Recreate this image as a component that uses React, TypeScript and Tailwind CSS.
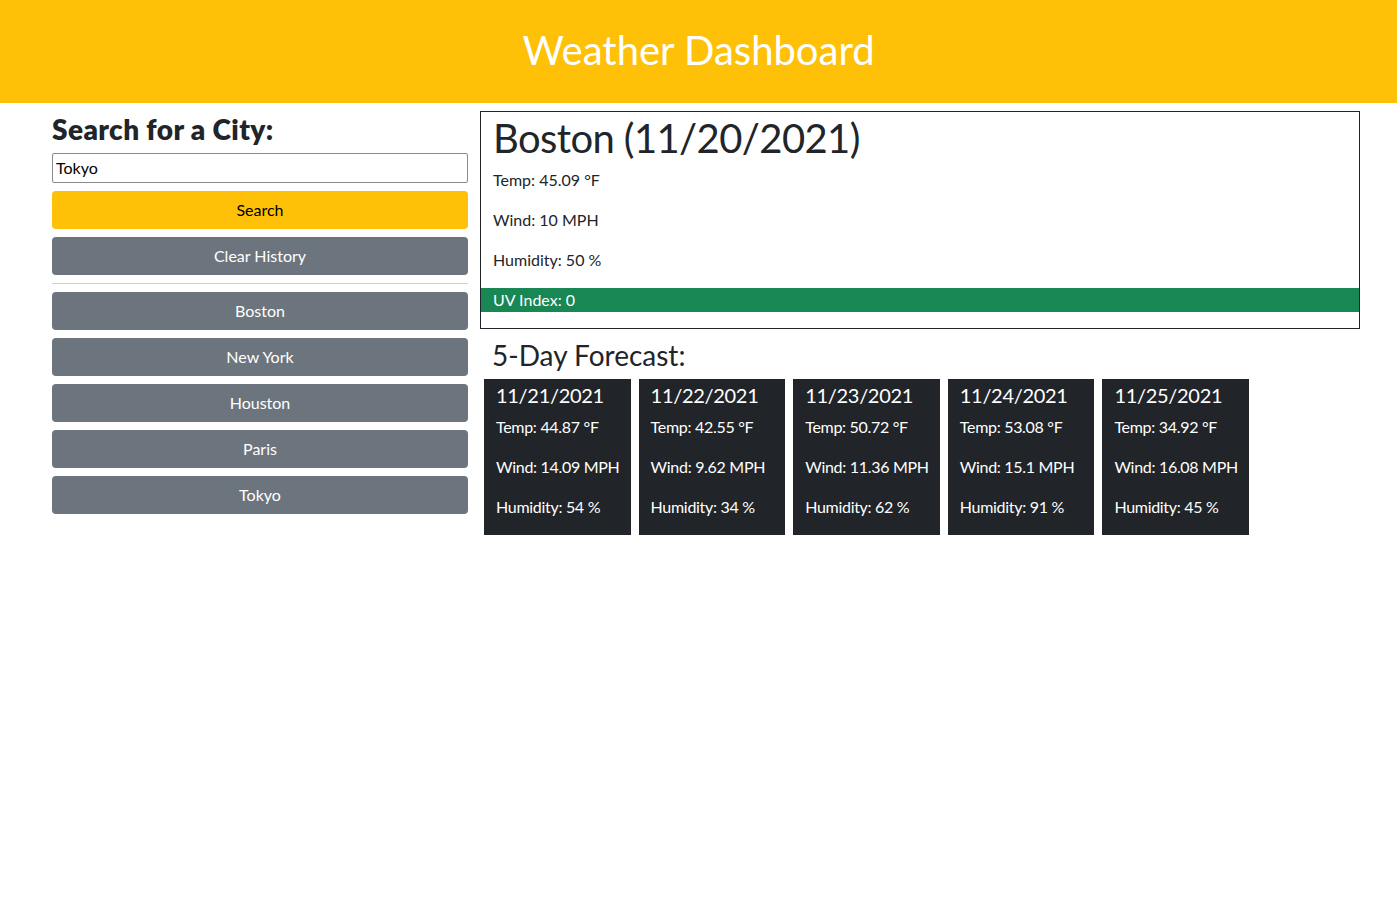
const forecast = [
  { date: "11/21/2021", temp: "44.87", wind: "14.09", hum: "54" },
  { date: "11/22/2021", temp: "42.55", wind: "9.62", hum: "34" },
  { date: "11/23/2021", temp: "50.72", wind: "11.36", hum: "62" },
  { date: "11/24/2021", temp: "53.08", wind: "15.1", hum: "91" },
  { date: "11/25/2021", temp: "34.92", wind: "16.08", hum: "45" },
];

const history = ["Boston", "New York", "Houston", "Paris", "Tokyo"];

export default function App() {
  return (
    <div className="min-h-[915px] bg-white text-[#212529] [font-family:Lato,'Noto_Sans',sans-serif] text-base leading-6">
      <header className="h-[103px] bg-[#ffc107] flex items-center justify-center pb-1">
        <h1 className="text-[40px] leading-[1.2] text-white font-normal">Weather Dashboard</h1>
      </header>

      <div className="flex gap-3 pl-[52px] pt-2">
        <aside className="w-[416px] flex flex-col">
          <h3 className="text-[28px] leading-[1.2] font-extrabold tracking-[0.4px] pt-[2px] mb-[6px]">
            Search for a City:
          </h3>
          <input
            defaultValue="Tokyo"
            className="h-[30px] border border-[#8a8a8a] rounded-[2px] px-[3px] text-base text-black outline-none"
          />
          <button className="mt-2 h-[38px] rounded bg-[#ffc107] text-black">Search</button>
          <button className="mt-2 h-[38px] rounded bg-[#6c757d] text-white">Clear History</button>
          <hr className="mt-2 mb-2 border-t border-[#cfcfcf]" />
          <div className="flex flex-col gap-2">
            {history.map((c) => (
              <button key={c} className="h-[38px] rounded bg-[#6c757d] text-white">
                {c}
              </button>
            ))}
          </div>
        </aside>

        <main className="w-[880px]">
          <section className="border border-[#212529]">
            <h1 className="px-3 text-[40px] leading-[1.2] tracking-[-0.6px] pt-[2px] mb-[6px]">
              Boston (11/20/2021)
            </h1>
            <p className="px-3 mb-4">Temp: 45.09 °F</p>
            <p className="px-3 mb-4">Wind: 10 MPH</p>
            <p className="px-3 mb-4">Humidity: 50 %</p>
            <p className="px-3 mb-4 bg-[#198754] text-white">UV Index: 0</p>
          </section>

          <h3 className="mt-2 px-3 text-[28px] leading-[1.2] pt-[2px] mb-[6px]">5-Day Forecast:</h3>
          <div className="flex gap-2 pl-1">
            {forecast.map((d) => (
              <div
                key={d.date}
                className="w-[146.6px] bg-[#212529] text-white pl-3 pt-1 whitespace-nowrap tracking-[-0.3px]"
              >
                <h5 className="text-xl leading-[1.2] mb-2">{d.date}</h5>
                <p className="mb-4">Temp: {d.temp} °F</p>
                <p className="mb-4">Wind: {d.wind} MPH</p>
                <p className="mb-4">Humidity: {d.hum} %</p>
              </div>
            ))}
          </div>
        </main>
      </div>
    </div>
  );
}
